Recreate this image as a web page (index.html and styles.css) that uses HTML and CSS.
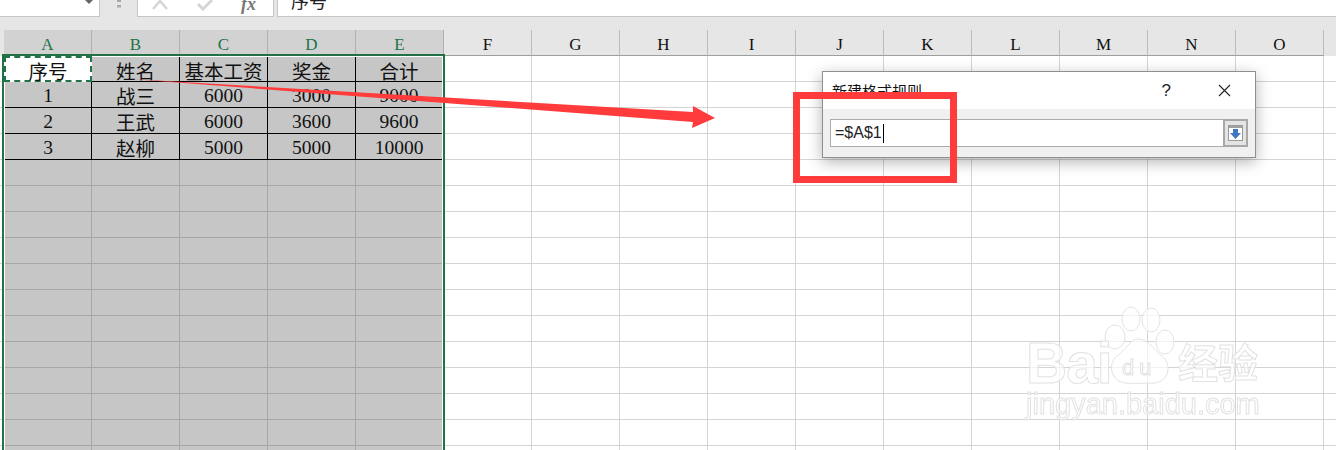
FILE: index.html
```html
<!DOCTYPE html>
<html lang="zh-CN">
<head>
    <meta charset="UTF-8">
    <title>新建格式规则</title>
    <link rel="stylesheet" href="styles.css">
</head>
<body>
    <!-- Formula bar, cut off at the top -->
    <div class="toolbar">
        <div class="name-box"><span class="name-arrow"></span></div>
        <div class="grip">
            <svg width="4" height="10" viewBox="0 0 4 10"><rect x="0" y="0" width="4" height="2" fill="#a8a8a8"/><rect x="0" y="5" width="4" height="2.5" fill="#a8a8a8"/></svg>
        </div>
        <div class="fx-box">
            <svg width="16" height="10" viewBox="0 0 16 10"><path d="M1 9 L8 1 L15 9" fill="none" stroke="#d6d6d6" stroke-width="2.6"/></svg>
            <svg width="16" height="11" viewBox="0 0 16 11"><path d="M1 4 L6 9 L15 0" fill="none" stroke="#d6d6d6" stroke-width="3"/></svg>
            <span class="fx-label">fx</span>
        </div>
        <div class="formula">序号</div>
    </div>

    <!-- Column headings -->
    <div class="col-heads">
        <div class="col-head selected">A</div>
        <div class="col-head selected">B</div>
        <div class="col-head selected">C</div>
        <div class="col-head selected">D</div>
        <div class="col-head selected">E</div>
        <div class="col-head">F</div>
        <div class="col-head">G</div>
        <div class="col-head">H</div>
        <div class="col-head">I</div>
        <div class="col-head">J</div>
        <div class="col-head">K</div>
        <div class="col-head">L</div>
        <div class="col-head">M</div>
        <div class="col-head">N</div>
        <div class="col-head">O</div>
    </div>

    <!-- Worksheet -->
    <div class="sheet">
        <div class="selection">
            <div class="sel-fill">
                <div class="data">
                    <div class="cell active">序号</div>
                    <div class="cell">姓名</div>
                    <div class="cell">基本工资</div>
                    <div class="cell">奖金</div>
                    <div class="cell last">合计</div>

                    <div class="cell">1</div>
                    <div class="cell">战三</div>
                    <div class="cell">6000</div>
                    <div class="cell">3000</div>
                    <div class="cell last">9000</div>

                    <div class="cell">2</div>
                    <div class="cell">王武</div>
                    <div class="cell">6000</div>
                    <div class="cell">3600</div>
                    <div class="cell last">9600</div>

                    <div class="cell">3</div>
                    <div class="cell">赵柳</div>
                    <div class="cell">5000</div>
                    <div class="cell">5000</div>
                    <div class="cell last">10000</div>
                </div>
            </div>
        </div>
    </div>

    <!-- Watermark -->
    <div class="watermark">
        <svg class="paw" width="70" height="80" viewBox="0 0 70 80">
            <ellipse cx="27" cy="13" rx="9" ry="12"/>
            <ellipse cx="47" cy="14" rx="9" ry="12"/>
            <ellipse cx="11" cy="31" rx="10" ry="12"/>
            <ellipse cx="61" cy="36" rx="9" ry="12"/>
            <path d="M34 33 C26 33 22 44 13 50 C3 58 7 76 22 77 C30 78 42 77 50 77 C65 76 69 58 57 49 C49 43 44 33 34 33 Z"/>
        </svg>
        <span class="wm-bai">Bai</span>
        <span class="wm-du">du</span>
        <span class="wm-jy">经验</span>
        <div class="wm-url">jingyan.baidu.com</div>
    </div>

    <!-- Dialog -->
    <div class="dialog">
        <div class="dialog-title">
            <span class="dialog-name">新建格式规则</span>
            <span class="dialog-help">?</span>
            <svg class="dialog-close" width="13" height="13" viewBox="0 0 13 13"><path d="M1 1 L12 12 M12 1 L1 12" stroke="#222" stroke-width="1.1" fill="none"/></svg>
        </div>
        <div class="dialog-body">
            <div class="ref-input">
                <span class="ref-text">=$A$1</span><span class="caret"></span>
            </div>
            <div class="ref-btn">
                <svg width="15" height="16" viewBox="0 0 15 16">
                    <rect x="0.5" y="0.5" width="14" height="15" fill="#fff" stroke="#9a9a9a"/>
                    <rect x="1" y="1" width="13" height="2" fill="#a0a0a0"/>
                    <path d="M5 4 H10 V8 H13 L7.5 14 L2 8 H5 Z" fill="#3f78c0"/>
                </svg>
            </div>
        </div>
    </div>

    <!-- Red annotations -->
    <div class="callout"></div>
    <svg class="arrow" width="1336" height="450" viewBox="0 0 1336 450">
        <path d="M131 79 L693 112 L693 106 L715 118 L692 128 L693 122 Z" fill="#ff3b3b"/>
    </svg>
</body>
</html>
```

FILE: styles.css
```css
html, body {
    margin: 0;
    padding: 0;
}
body {
    position: relative;
    width: 1336px;
    height: 450px;
    overflow: hidden;
    background: #fff;
    font-family: "Liberation Serif", "Noto Sans CJK SC", serif;
    color: #111;
}

/* formula bar */
.toolbar {
    display: flex;
    height: 17px;
    background: #e6e6e6;
    overflow: hidden;
}
.name-box {
    position: relative;
    width: 100px;
    background: #fff;
    border-right: 1px solid #c6c6c6;
    border-bottom: 1px solid #c6c6c6;
    box-sizing: border-box;
}
.name-arrow {
    position: absolute;
    left: 85px;
    top: 0;
    border-left: 4px solid transparent;
    border-right: 4px solid transparent;
    border-top: 4px solid #666;
}
.grip {
    display: flex;
    justify-content: center;
    width: 37px;
}
.fx-box {
    display: flex;
    align-items: flex-start;
    width: 137px;
    padding-left: 14px;
    gap: 29px;
    background: #fff;
    border: 1px solid #c6c6c6;
    border-top: none;
    box-sizing: border-box;
}
.fx-label {
    margin: -6px 0 0 -1px;
    font-size: 18px;
    font-style: italic;
    font-weight: bold;
    color: #777;
}
.formula {
    flex: 1;
    display: flex;
    align-items: flex-end;
    margin-left: 3px;
    padding: 0 0 7px 13px;
    box-sizing: border-box;
    background: #fff;
    border-left: 1px solid #c6c6c6;
    border-bottom: 1px solid #c6c6c6;
    font-family: "Noto Sans CJK SC", sans-serif;
    font-size: 18px;
    line-height: 18px;
    color: #222;
}

/* column headings */
.col-heads {
    display: flex;
    padding: 13px 0 0 4px;
    background: #e6e6e6;
}
.col-head {
    flex-shrink: 0;
    width: 87px;
    height: 25px;
    line-height: 30px;
    text-align: center;
    font-size: 17px;
    background: #e6e6e6;
    border-right: 1px solid #bcbcbc;
    border-bottom: 1px solid #9e9e9e;
}
.col-head.selected {
    background: #d2d2d2;
    color: #217346;
    border-right-color: #b0b0b0;
}

/* worksheet */
.sheet {
    height: 394px;
    background-image:
        linear-gradient(to left, #d4d4d4 1px, transparent 1px),
        linear-gradient(to top, #d4d4d4 1px, transparent 1px);
    background-size: 88px 100%, 100% 26px;
    background-position: 4px 0, 0 0;
}
.selection {
    box-sizing: border-box;
    position: relative;
    top: -2px;
    width: 443px;
    height: 400px;
    margin-left: 2px;
    border: 2px solid #217346;
    padding: 1px 0 0 1px;
    background: #fff;
}
.sel-fill {
    width: 437px;
    height: 394px;
    background-color: #c6c6c6;
    background-image:
        linear-gradient(to left, #a6a6a6 1px, transparent 1px),
        linear-gradient(to top, #a6a6a6 1px, transparent 1px);
    background-size: 88px 100%, 100% 26px;
    background-position: -1px 0, 0 -1px;
}
.data {
    display: grid;
    grid-template-columns: 87px 88px 88px 88px 86px;
    grid-template-rows: 25px 26px 26px 26px;
    font-size: 19.5px;
}
.cell {
    display: flex;
    align-items: center;
    justify-content: center;
    padding-top: 2px;
    border-right: 1px solid #000;
    border-bottom: 1px solid #000;
    box-sizing: border-box;
    white-space: nowrap;
}
.cell.last {
    border-right: none;
}
.cell.active {
    margin: -1px 0 0 -1px;
    background: #fff;
    border: 2px dashed #217346;
}

/* watermark: its parts sit freely on top of the grid, like a stamped logo */
.watermark {
    position: absolute;
    left: 1026px;
    top: 306px;
    width: 240px;
    height: 116px;
    font-family: "Liberation Sans", sans-serif;
    color: rgba(255, 255, 255, 0.7);
    -webkit-text-stroke: 1px #e2e2e2;
    white-space: nowrap;
    filter: blur(0.3px);
}
.paw {
    position: absolute;
    left: 78px;
    top: 0;
    fill: rgba(255, 255, 255, 0.7);
    stroke: #e2e2e2;
    stroke-width: 1;
}
.wm-bai {
    position: absolute;
    left: 0;
    top: 31px;
    font-size: 57px;
    line-height: 52px;
    font-weight: bold;
    letter-spacing: -1px;
}
.wm-du {
    position: absolute;
    left: 96px;
    top: 50px;
    font-size: 22px;
    line-height: 24px;
    letter-spacing: 5px;
}
.wm-jy {
    position: absolute;
    left: 152px;
    top: 29px;
    font-family: "Noto Sans CJK SC", sans-serif;
    font-weight: bold;
    font-size: 40px;
    line-height: 52px;
}
.wm-url {
    position: absolute;
    left: 0;
    top: 83px;
    font-size: 29px;
    line-height: 30px;
}

/* dialog */
.dialog {
    position: absolute;
    left: 822px;
    top: 71px;
    width: 434px;
    height: 87px;
    box-sizing: border-box;
    border: 1px solid #8f8f8f;
    background: #f0f0f0;
    box-shadow: 0 4px 14px rgba(0, 0, 0, 0.3);
    font-family: "Liberation Sans", "Noto Sans CJK SC", sans-serif;
}
.dialog-title {
    display: flex;
    align-items: center;
    height: 37px;
    padding: 0 24px 0 9px;
    background: #fff;
}
.dialog-name {
    flex: 1;
    font-size: 15px;
    color: #111;
}
.dialog-help {
    margin-right: 47px;
    font-size: 17px;
    color: #222;
}
.dialog-body {
    display: flex;
    height: 28px;
    margin: 10px 7px 0;
}
.ref-input {
    flex: 1;
    display: flex;
    align-items: center;
    padding-left: 4px;
    background: #fff;
    border: 1px solid #ababab;
    border-right: none;
    font-size: 16px;
    color: #222;
}
.caret {
    width: 1px;
    height: 19px;
    margin-left: 1px;
    background: #000;
}
.ref-btn {
    display: flex;
    align-items: center;
    justify-content: center;
    width: 21px;
    background: #e4e4e4;
    border: 2px solid #a8a8a8;
}

/* red annotations */
.callout {
    position: absolute;
    left: 793px;
    top: 92px;
    width: 150px;
    height: 77px;
    border: 7px solid #ff3b3b;
}
.arrow {
    position: absolute;
    left: 0;
    top: 0;
}
```
